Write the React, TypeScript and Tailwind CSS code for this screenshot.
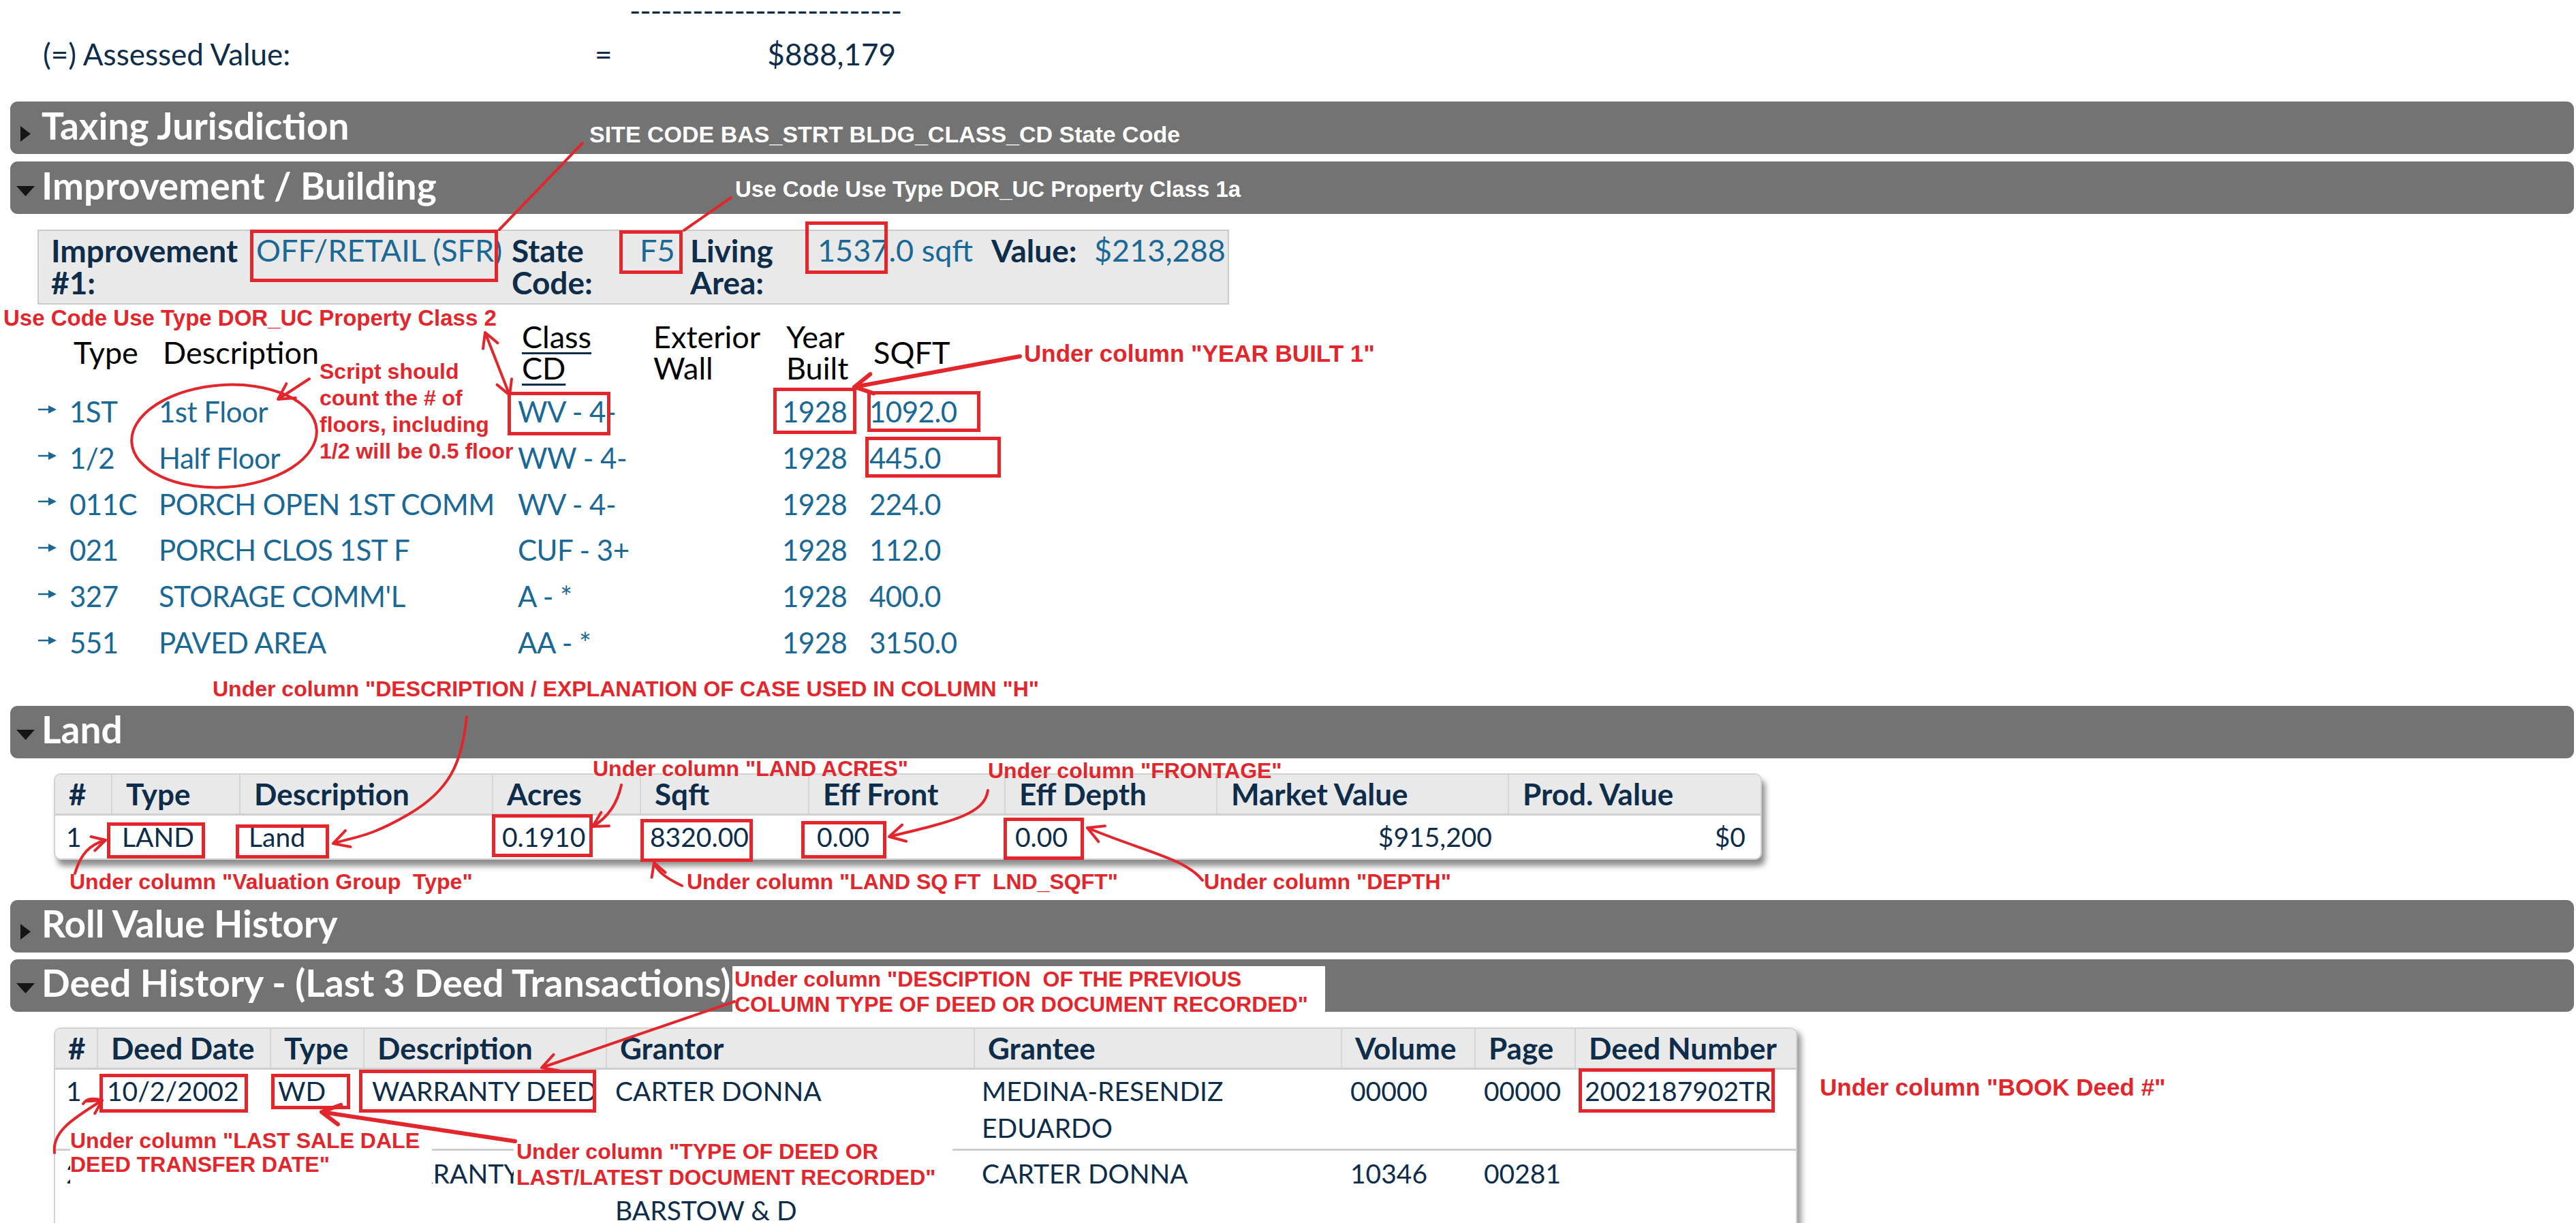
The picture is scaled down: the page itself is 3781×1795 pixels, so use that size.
import React from "react";

const head = (x: number, y: number, fx: number, fy: number, len = 24, spread = 0.5) => {
  const a = Math.atan2(y - fy, x - fx);
  const x1 = x - len * Math.cos(a - spread);
  const y1 = y - len * Math.sin(a - spread);
  const x2 = x - len * Math.cos(a + spread);
  const y2 = y - len * Math.sin(a + spread);
  return `M${x1.toFixed(1)} ${y1.toFixed(1)} L${x} ${y} L${x2.toFixed(1)} ${y2.toFixed(1)}`;
};

// red boxes drawn over the page: x, y, w, h
const boxes: number[][] = [
  [367, 337, 364, 77],
  [909, 338, 93, 64],
  [1182, 325, 121, 77],
  [745, 575, 151, 64],
  [1135, 569, 122, 68],
  [1273, 574, 166, 60],
  [1270, 641, 199, 60],
  [157, 1207, 144, 53],
  [346, 1210, 137, 50],
  [722, 1195, 148, 63],
  [940, 1202, 165, 63],
  [1176, 1205, 125, 55],
  [1473, 1200, 118, 62],
  [527, 1570, 348, 63],
  [146, 1576, 218, 57],
  [398, 1576, 116, 52],
  [2317, 1568, 288, 65],
];

const Tri = ({ open }: { open: boolean }) =>
  open ? (
    <svg width="27" height="15" viewBox="0 0 27 15">
      <path d="M0 0 H27 L13.5 15 Z" fill="#151515" />
    </svg>
  ) : (
    <svg width="15" height="23" viewBox="0 0 15 23">
      <path d="M0 0 L15 11.5 L0 23 Z" fill="#151515" />
    </svg>
  );

const Bar = ({ title, open }: { title: string; open: boolean }) => (
  <div className="ml-[15px] mr-[3px] flex h-[77px] items-center rounded-[11px] bg-[#737373] pb-[7px] pl-[5px]">
    <div className={`flex w-[35px] justify-center ${open ? "mt-[16px]" : "mt-[24px]"}`}>
      <Tri open={open} />
    </div>
    <span className="ml-[6px] text-[55px] font-bold leading-none text-white">{title}</span>
  </div>
);

const RowArrow = () => (
  <svg width="27" height="16" viewBox="0 0 27 16">
    <path d="M0 8 H19" stroke="#1a6896" strokeWidth="2.5" />
    <path d="M15 2 L27 8 L15 14 Z" fill="#1a6896" />
  </svg>
);

const impRows = [
  ["1ST", "1st Floor", "WV - 4-", "1928", "1092.0"],
  ["1/2", "Half Floor", "WW - 4-", "1928", "445.0"],
  ["011C", "PORCH OPEN 1ST COMM", "WV - 4-", "1928", "224.0"],
  ["021", "PORCH CLOS 1ST F", "CUF - 3+", "1928", "112.0"],
  ["327", "STORAGE COMM'L", "A - *", "1928", "400.0"],
  ["551", "PAVED AREA", "AA - *", "1928", "3150.0"],
];

const landHead = ["#", "Type", "Description", "Acres", "Sqft", "Eff Front", "Eff Depth", "Market Value", "Prod. Value"];
const deedHead = ["#", "Deed Date", "Type", "Description", "Grantor", "Grantee", "Volume", "Page", "Deed Number"];

const ann = "absolute whitespace-pre font-['Liberation_Sans',Arial,sans-serif] font-bold text-[#e3262b]";

export default function App() {
  return (
    <div className="relative h-[1795px] w-[3781px] overflow-hidden bg-white font-['Lato',sans-serif] text-[#0d2d4b]">
      {/* totals */}
      <div className="h-[25px] pl-[924px] text-[44px] leading-[30px] tracking-[-1px]">--------------------------</div>
      <div className="mt-[24px] flex h-[60px] text-[44px] leading-[60px]">
        <span className="w-[873px] pl-[63px]">(=) Assessed Value:</span>
        <span className="w-[40px]">=</span>
        <span className="w-[402px] text-right">$888,179</span>
      </div>

      <div className="mt-[40px]">
        <Bar title="Taxing Jurisdiction" open={false} />
      </div>
      <div className="mt-[11px]">
        <Bar title="Improvement / Building" open />
      </div>

      {/* improvement summary */}
      <div className="ml-[55px] mt-[23px] flex h-[110px] w-[1749px] border-2 border-[#cbcbcb] bg-[#e9e9e9] pl-[18px] pt-[5px] text-[45px] leading-[47px]">
        <div className="w-[295px] text-[46px] font-bold">Improvement<br />#1:</div>
        <div className="w-[381px] pl-[6px] text-[#1a6896]">OFF/RETAIL (SFR)</div>
        <div className="w-[184px] text-[46px] font-bold">State<br />Code:</div>
        <div className="w-[78px] pl-[4px] text-[#1a6896]">F5</div>
        <div className="w-[182px] text-[46px] font-bold">Living<br />Area:</div>
        <div className="w-[260px] pl-[5px] text-[#1a6896]">1537.0 sqft</div>
        <div className="w-[145px] text-[46px] font-bold">Value:</div>
        <div className="pl-[6px] text-[#1a6896]">$213,288</div>
      </div>

      {/* improvement detail */}
      <div className="ml-[56px] mt-[24px]">
        <div className="grid h-[92px] grid-cols-[46px_131px_527px_193px_195px_128px_200px] items-center text-[45px] leading-[46px] text-black">
          <div />
          <div className="pl-[6px]">Type</div>
          <div className="pl-[6px]">Description</div>
          <div className="pl-[6px] underline decoration-[#0d2d4b] decoration-[3px] underline-offset-[6px]">Class<br />CD</div>
          <div className="pl-[6px]">Exterior<br />Wall</div>
          <div className="pl-[6px]">Year<br />Built</div>
          <div className="pl-[6px]">SQFT</div>
        </div>
        <div className="mt-[8px]">
          {impRows.map((r) => (
            <div key={r[0]} className="grid h-[67.8px] grid-cols-[46px_131px_527px_193px_195px_128px_200px] items-center text-[42px] leading-[67.8px] tracking-[-0.5px] text-[#1a6896]">
              <div className="flex items-center pb-[8px]">
                <RowArrow />
              </div>
              <div>{r[0]}</div>
              <div className="whitespace-nowrap">{r[1]}</div>
              <div>{r[2]}</div>
              <div />
              <div>{r[3]}</div>
              <div>{r[4]}</div>
            </div>
          ))}
        </div>
      </div>

      <div className="mt-[58px]">
        <Bar title="Land" open />
      </div>

      {/* land table */}
      <div className="ml-[79px] mt-[22px] w-[2507px] overflow-hidden rounded-[10px] border-2 border-[#d2d2d2] bg-white shadow-[5px_9px_9px_rgba(0,0,0,0.45)]">
        <div className="grid h-[60px] grid-cols-[82px_188px_371px_217px_247px_288px_311px_428px_371px] border-b-[3px] border-[#cfcfcf] bg-[#e9e9e9] text-[44px] font-bold leading-[57px]">
          {landHead.map((h, i) => (
            <div key={h} className={`whitespace-nowrap pl-[20px] ${i ? "border-l-2 border-[#d6d6d6]" : ""}`}>{h}</div>
          ))}
        </div>
        <div className="grid h-[63px] grid-cols-[82px_188px_371px_217px_247px_288px_311px_428px_371px] text-[39px] leading-[63px]">
          <div className="pl-[16px]">1</div>
          <div className="pl-[16px]">LAND</div>
          <div className="pl-[14px]">Land</div>
          <div className="pl-[15px]">0.1910</div>
          <div className="pl-[15px]">8320.00</div>
          <div className="pl-[13px]">0.00</div>
          <div className="pl-[16px]">0.00</div>
          <div className="pr-[23px] text-right">$915,200</div>
          <div className="pr-[22px] text-right">$0</div>
        </div>
      </div>

      <div className="mt-[59px]">
        <Bar title="Roll Value History" open={false} />
      </div>
      <div className="mt-[10px]">
        <Bar title="Deed History - (Last 3 Deed Transactions)" open />
      </div>

      {/* deed table */}
      <div className="ml-[79px] mt-[23px] w-[2559px] rounded-t-[10px] border-2 border-[#d2d2d2] bg-white shadow-[6px_6px_9px_rgba(0,0,0,0.4)]">
        <div className="grid h-[60px] grid-cols-[61px_254px_137px_356px_540px_539px_196px_147px_325px] rounded-t-[8px] border-b-[3px] border-[#cfcfcf] bg-[#e9e9e9] text-[44px] font-bold leading-[57px]">
          {deedHead.map((h, i) => (
            <div key={h} className={`whitespace-nowrap pl-[19px] ${i ? "border-l-2 border-[#d6d6d6]" : ""}`}>{h}</div>
          ))}
        </div>
        <div className="grid h-[119px] grid-cols-[61px_254px_137px_356px_540px_539px_196px_147px_325px] border-b-[3px] border-[#cfcfcf] pt-[4px] text-[39px] leading-[54px]">
          <div className="pl-[16px]">1</div>
          <div className="pl-[15px]">10/2/2002</div>
          <div className="pl-[12px]">WD</div>
          <div className="pl-[13px]">WARRANTY DEED</div>
          <div className="pl-[14px]">CARTER DONNA</div>
          <div className="pl-[12px]">MEDINA-RESENDIZ<br />EDUARDO</div>
          <div className="pl-[14px]">00000</div>
          <div className="pl-[14px]">00000</div>
          <div className="pl-[15px]">2002187902TR</div>
        </div>
        <div className="grid h-[160px] grid-cols-[61px_254px_137px_356px_540px_539px_196px_147px_325px] pt-[6px] text-[39px] leading-[54px]">
          <div className="pl-[16px]">2</div>
          <div />
          <div />
          <div className="pl-[13px]">WARRANTY DEED</div>
          <div className="pl-[14px] pt-[54px]">BARSTOW &amp; D</div>
          <div className="pl-[12px]">CARTER DONNA</div>
          <div className="pl-[14px]">10346</div>
          <div className="pl-[14px]">00281</div>
          <div />
        </div>
      </div>

      {/* annotations */}
      <div className={`${ann} left-[865px] top-[180px] text-[34px] leading-[34px] text-white`}>SITE CODE BAS_STRT BLDG_CLASS_CD State Code</div>
      <div className={`${ann} left-[1079px] top-[261px] text-[33px] leading-[33px] text-white`}>Use Code Use Type DOR_UC Property Class 1a</div>
      <div className={`${ann} left-[5px] top-[450px] text-[33px] leading-[33px]`}>Use Code Use Type DOR_UC Property Class 2</div>
      <div className={`${ann} left-[469px] top-[526px] text-[32px] leading-[39px]`}>{"Script should\ncount the # of\nfloors, including\n1/2 will be 0.5 floor"}</div>
      <div className={`${ann} left-[1503px] top-[501px] text-[35px] leading-[35px]`}>{'Under column "YEAR BUILT 1"'}</div>
      <div className={`${ann} left-[312px] top-[995px] text-[32px] leading-[32px]`}>{'Under column "DESCRIPTION / EXPLANATION OF CASE USED IN COLUMN "H"'}</div>
      <div className={`${ann} left-[870px] top-[1112px] text-[32px] leading-[32px]`}>{'Under column "LAND ACRES"'}</div>
      <div className={`${ann} left-[1450px] top-[1115px] text-[32px] leading-[32px]`}>{'Under column "FRONTAGE"'}</div>
      <div className={`${ann} left-[102px] top-[1278px] text-[32px] leading-[32px]`}>{'Under column "Valuation Group  Type"'}</div>
      <div className={`${ann} left-[1008px] top-[1278px] text-[32px] leading-[32px]`}>{'Under column "LAND SQ FT  LND_SQFT"'}</div>
      <div className={`${ann} left-[1767px] top-[1278px] text-[32px] leading-[32px]`}>{'Under column "DEPTH"'}</div>
      <div className={`${ann} left-[1075px] top-[1418px] h-[69px] w-[870px] bg-white pl-[3px] pt-[1px] text-[32px] leading-[37px]`}>{'Under column "DESCIPTION  OF THE PREVIOUS\nCOLUMN TYPE OF DEED OR DOCUMENT RECORDED"'}</div>
      <div className={`${ann} left-[2671px] top-[1578px] text-[35px] leading-[35px]`}>{'Under column "BOOK Deed #"'}</div>
      <div className={`${ann} left-[103px] top-[1655px] h-[97px] w-[531px] bg-white pt-[2px] text-[32px] leading-[35px]`}>{'Under column "LAST SALE DALE\nDEED TRANSFER DATE"'}</div>
      <div className={`${ann} left-[754px] top-[1668px] h-[84px] w-[644px] bg-white pl-[4px] pt-[3px] text-[32px] leading-[38px]`}>{'Under column "TYPE OF DEED OR\nLAST/LATEST DOCUMENT RECORDED"'}</div>

      <svg className="pointer-events-none absolute left-0 top-0" width="3781" height="1795" viewBox="0 0 3781 1795" fill="none" stroke="#e3262b" strokeLinecap="round" strokeLinejoin="round">
        {boxes.map(([x, y, w, h], i) => (
          <rect key={i} x={x + 2.5} y={y + 2.5} width={w - 5} height={h - 5} strokeWidth="5" strokeLinecap="butt" strokeLinejoin="miter" />
        ))}
        <path d="M855 210 L733 337" strokeWidth="4" />
        <path d="M1073 290 L1004 338" strokeWidth="4" />
        <path d={`M712 488 L748 580 ${head(712, 488, 748, 580)} ${head(748, 580, 712, 488)}`} strokeWidth="4" />
        <ellipse cx="329" cy="640" rx="136" ry="75" transform="rotate(-4 329 640)" strokeWidth="4" />
        <path d={`M454 556 L408 586 ${head(408, 586, 454, 556, 26)}`} strokeWidth="4" />
        <path d={`M1497 523 L1254 568 ${head(1254, 568, 1497, 523, 30)}`} strokeWidth="6" />
        <path d={`M685 1052 C678 1120 660 1160 600 1195 S520 1228 489 1238 ${head(489, 1238, 520, 1228, 26)}`} strokeWidth="4" />
        <path d={`M912 1152 C906 1180 892 1200 870 1213 ${head(870, 1213, 892, 1200, 24)}`} strokeWidth="4" />
        <path d={`M1450 1160 C1445 1195 1400 1205 1305 1228 ${head(1305, 1228, 1400, 1205, 26)}`} strokeWidth="4" />
        <path d={`M110 1282 C118 1255 130 1240 155 1233 ${head(155, 1233, 130, 1240, 22)}`} strokeWidth="4" />
        <path d={`M1001 1300 C980 1290 965 1280 960 1266 ${head(960, 1266, 965, 1280, 22)}`} strokeWidth="4" />
        <path d={`M1765 1292 C1740 1260 1680 1250 1596 1215 ${head(1596, 1215, 1680, 1250, 26)}`} strokeWidth="4" />
        <path d={`M1078 1470 L795 1567 ${head(795, 1567, 1078, 1470, 26)}`} strokeWidth="4" />
        <path d={`M80 1692 C76 1660 110 1640 150 1615 ${head(150, 1615, 110, 1640, 22)}`} strokeWidth="4" />
        <path d="M122 1620 C128 1610 140 1612 150 1615" strokeWidth="4" />
        <path d={`M756 1675 L472 1632 ${head(472, 1632, 756, 1675, 30)}`} strokeWidth="6" />
      </svg>
    </div>
  );
}
